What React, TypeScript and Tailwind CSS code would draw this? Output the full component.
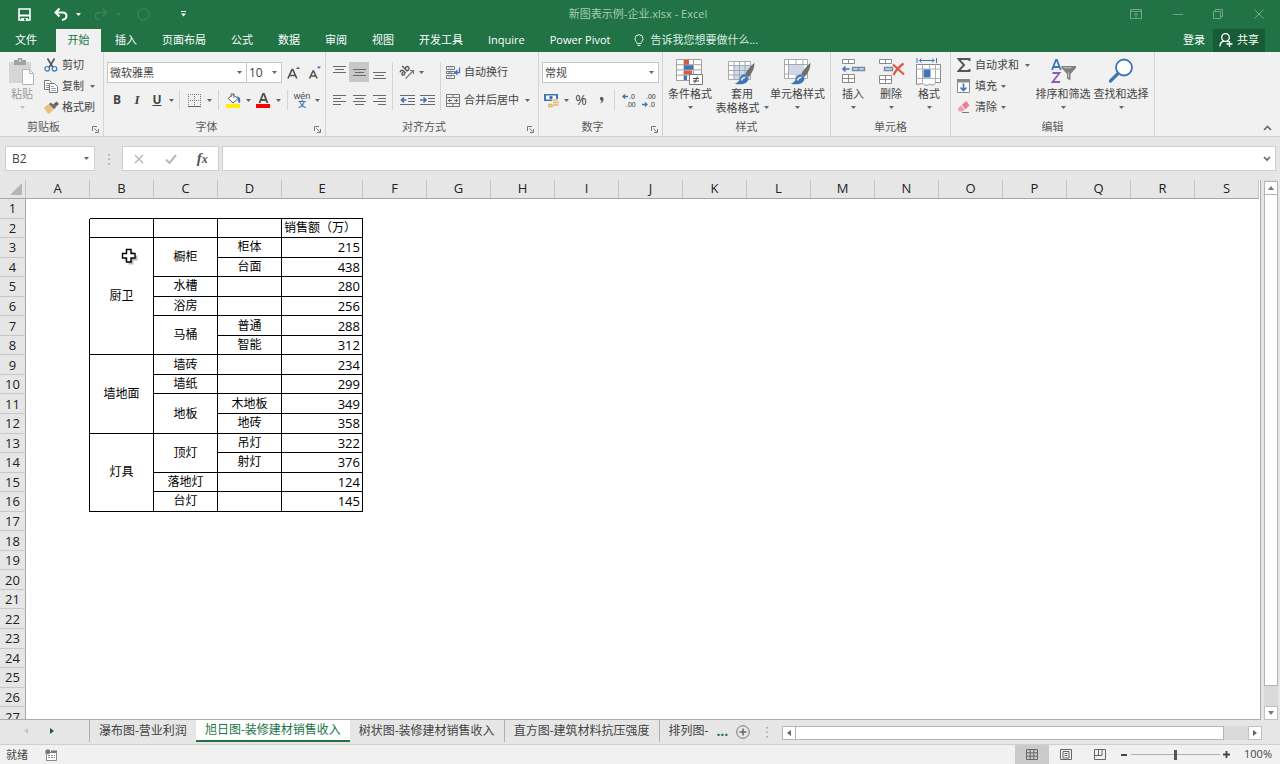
import type { ReactNode } from "react";

type Kids = { children?: ReactNode };

/* ---------- small building blocks ---------- */

function Arrow({ className = "text-[#666]" }: { className?: string }) {
  return (
    <svg width="5" height="3" viewBox="0 0 5 3" className={"shrink-0 " + className} aria-hidden="true">
      <path d="M0 0h5L2.5 3z" fill="currentColor" />
    </svg>
  );
}

function Svg({ w, h, children, className = "" }: Kids & { w: number; h: number; className?: string }) {
  return (
    <svg width={w} height={h} viewBox={`0 0 ${w} ${h}`} fill="none" className={"shrink-0 " + className} aria-hidden="true">
      {children}
    </svg>
  );
}

function Group({ label, width, launcher = false, children }: Kids & { label: string; width: string; launcher?: boolean }) {
  return (
    <section aria-label={label} className={"flex shrink-0 flex-col border-r border-[#d4d4d4] " + width}>
      <div className="flex h-[66px] items-start">{children}</div>
      <div className="flex h-[17px] items-center text-[#5a5a5a]">
        <span className="flex-1 text-center">{label}</span>
        {launcher && (
          <button type="button" aria-label={label + "设置"} className="flex w-4 justify-center pt-1.5">
            <Svg w={7} h={7}>
              <path d="M.5 5V.5H5M2.5 2.5l3 3M6.5 3v3.5H3" stroke="#777" />
            </Svg>
          </button>
        )}
      </div>
    </section>
  );
}

function Small({ icon, label, arrow = false, wide = false }: { icon: ReactNode; label: string; arrow?: boolean; wide?: boolean }) {
  return (
    <button type="button" className="flex h-5 items-center whitespace-nowrap">
      <span className="flex w-[18px] shrink-0">{icon}</span>
      {label}
      {arrow && <span className={wide ? "ml-1.5" : "ml-1"}><Arrow /></span>}
    </button>
  );
}

function Big({ icon, label, second, width, muted = false }: { icon: ReactNode; label: string; second?: string; width: string; muted?: boolean }) {
  return (
    <button type="button" className={"flex shrink-0 flex-col items-center whitespace-nowrap pt-1.5 leading-[14px] " + width + (muted ? " text-[#9a9a9a]" : "")}>
      <span className="flex h-[29px] items-start justify-center">{icon}</span>
      <span>{label}</span>
      <span className="flex h-[13px] items-center gap-1">
        {second}
        <Arrow className={muted ? "text-[#c0c0c0]" : "text-[#666]"} />
      </span>
    </button>
  );
}

function Tool({ label, width = "w-5", active = false, children }: Kids & { label: string; width?: string; active?: boolean }) {
  return (
    <button type="button" aria-label={label} className={"flex h-5 shrink-0 items-center justify-center " + width + (active ? " bg-[#c8c8c8]" : "")}>
      {children}
    </button>
  );
}

function Drop({ label, value, width }: { label: string; value: string; width: string }) {
  return (
    <div className={"relative h-[21px] shrink-0 border border-[#c6c6c6] bg-white " + width}>
      <select aria-label={label} className="block h-full w-full appearance-none bg-transparent pl-0.5 text-[#444] outline-none">
        <option>{value}</option>
      </select>
      <span className="pointer-events-none absolute top-2 right-1">
        <Arrow />
      </span>
    </div>
  );
}

const Rule = () => <span className="mx-1 h-5 w-px shrink-0 bg-[#d4d4d4]" />;

function Lines({ d }: { d: string }) {
  return (
    <Svg w={13} h={13}>
      <path d={d} stroke="#6a6a6a" />
    </Svg>
  );
}

/* ---------- icons ---------- */

const BLUE = "#3f74b5";
const GREY = "#777";

const Brush = () => (
  <>
    <path d="M26.5 5c-3.500 2.500-7.500 7.500-9.500 11.500l3.500 2.500c3.500-4 6-8.500 6-14z" fill="#6f6f6f" />
    <path d="M16.500 16.500c-3 0-4.500 2-5 5-.4 2-2.500 3.500-5 4 4.500 1.500 10 1 12.500-1.500 1.800-2 1.800-4 .5-5.500z" fill={BLUE} />
    <path d="M13.500 22.500c.5-2 1.800-3.300 4-3" stroke="#e4eefa" strokeWidth="1.600" />
  </>
);

const icons = {
  paste: (
    <Svg w={26} h={28}>
      <path d="M0 4h22v21H0z" fill="#d6d6d6" />
      <path d="M5 2h3.500a2.500 2.500 0 0 1 5 0H17v5H5z" fill="#a2a2a2" />
      <circle cx="11" cy="2.800" r="1" fill="#f1f1f1" />
      <path d="M13.500 11.500h7l4 4v11h-11z" fill="#fcfcfc" stroke="#b5b5b5" />
      <path d="M20.500 11.500v4h4" stroke="#b5b5b5" />
    </Svg>
  ),
  cut: (
    <Svg w={14} h={14}>
      <path d="M3.500 0.500 9 9.500M10.500 0.500 5 9.500" stroke="#555" strokeWidth="1.600" />
      <circle cx="3.200" cy="10.800" r="2.300" stroke={BLUE} strokeWidth="1.200" />
      <circle cx="10.500" cy="10.800" r="2.300" stroke={BLUE} strokeWidth="1.200" />
    </Svg>
  ),
  copy: (
    <Svg w={14} h={13}>
      <path d="M.5.5h5l2 2v7h-7z" fill="#fff" stroke={GREY} />
      <path d="M2 3.500h3M2 5.500h3M2 7.500h3" stroke="#999" />
      <path d="M5.500 3.500h5l3 3v6h-8z" fill="#fff" stroke={GREY} />
      <path d="M7 6.500h3M7 8.500h5M7 10.500h5" stroke="#8aa9cf" />
    </Svg>
  ),
  painter: (
    <Svg w={15} h={13}>
      <path d="M0 6.500 5 3l5 5-5 5C3 12 1 9 0 6.500z" fill="#e5c07f" />
      <path d="m5 3 2-1.500 5 5L10 8z" fill="#666" />
      <path d="m9 3.500 3.500-3L15 3l-3.500 3z" fill="#666" />
    </Svg>
  ),
  borders: (
    <Svg w={13} h={13}>
      <path d="M0 .5h13M0 6.500h13M.5 0v13M6.500 0v13M12.500 0v13" stroke="#777" strokeDasharray="1 1" />
      <path d="M0 12.500h13" stroke="#666" />
    </Svg>
  ),
  fill: (
    <Svg w={15} h={15}>
      <path d="m2 5.500 5-4 5 4-5 4.500z" fill="#fff" stroke="#666" />
      <path d="M5 4V1.500a1.500 1.500 0 0 1 3 0V5" stroke="#666" />
      <path d="M10.500 3.500c3 0 4.500 2 3.500 6.500-2-.5-2.500-2.500-2-4z" fill={BLUE} />
      <path d="M0 11h14v4H0z" fill="#ffef00" />
    </Svg>
  ),
  fontColor: (
    <Svg w={15} h={15}>
      <path d="M3.500 10 7 1h1l3.500 9M4.800 7h5.400" stroke="#555" strokeWidth="1.900" />
      <path d="M0 11h14v4H0z" fill="#f00" />
    </Svg>
  ),
  orient: (
    <Svg w={16} h={16}>
      <g transform="rotate(-45 6 7)" stroke="#555" strokeWidth="1.300">
        <path d="M1.500 4.500c1.500-1 3.500-.7 3.500 1V9M5 6.500c-2-.2-3.800.2-3.800 1.500S3.800 9.500 5 8" />
        <path d="M7.500 1.500V9" />
        <circle cx="9.300" cy="6.800" r="1.900" />
      </g>
      <path d="M6.500 14.500 14.500 6.500M11 6.500h3.500V10" stroke="#777" strokeWidth="1.200" />
    </Svg>
  ),
  wrap: (
    <Svg w={15} h={13}>
      <path d="M.5.5h8v3h-8zM.5 5.500h8v2h-8zM.5 9.500h8v3h-8z" fill="#fff" stroke={GREY} />
      <path d="M2 2h5M2 6.500h4M2 11h4" stroke="#9ab6da" />
      <path d="M13.500 1.500v5H9.500M11.500 4.200 9 6.500l2.500 2.300" stroke={BLUE} strokeWidth="1.300" />
    </Svg>
  ),
  merge: (
    <Svg w={14} h={13}>
      <path d="M.5.5h13v12H.5zM.5 3.500h13M.5 9.500h13M7 .5v3M7 9.500v3" stroke={GREY} />
      <path d="M2 6.500h4M12 6.500H8M4.200 4.800 2.500 6.500l1.700 1.700M9.800 4.800l1.700 1.700-1.700 1.700" stroke="#666" />
    </Svg>
  ),
  currency: (
    <Svg w={16} h={15}>
      <path d="M0 1h14v7H0z" fill={BLUE} />
      <path d="M2 2.500h10v4H2z" fill="#fff" />
      <circle cx="7" cy="4.500" r="1.800" fill={BLUE} />
      <path d="M8 6h6v8H8z" fill="#f1f1f1" />
      <path d="M8.500 7h5M9 9.500h6M8.500 12h6M4 11.500h4M4 13.500h5" stroke="#e3b566" strokeWidth="1.600" />
    </Svg>
  ),
  conditional: (
    <Svg w={28} h={28}>
      <path d="M.5 1.500h25v21H.5zM.5 6.700h25M.5 11.900h25M.5 17.100h25M8 1.500v21M17.500 1.500v21" fill="#fff" stroke="#a0a0a0" />
      <path d="M8 2h5v4.700H8zM8 12.500h8v4H8z" fill="#d35c3f" />
      <path d="M8 7.200h9v4.500H8zM8 17.500h3v4.500H8z" fill={BLUE} />
      <path d="M13.500 16.500h13v10h-13z" fill="#fff" stroke="#777" />
      <path d="M17 20.500h6M17 23h6M21.500 18.500l-3 6.500" stroke="#444" />
    </Svg>
  ),
  tableFormat: (
    <Svg w={28} h={28}>
      <path d="M.5 3.500h22v18H.5z" fill="#fff" />
      <path d="M6 8h16.500v13.500H6z" fill="#cbdcf0" />
      <path d="M.5 3.500h22v18H.5zM.5 7.500h22M.5 12.500h22M.5 17h22M6 3.500v18M11.500 3.500v18M17 3.500v18" stroke="#a8a8a8" />
      <Brush />
    </Svg>
  ),
  cellStyle: (
    <Svg w={28} h={28}>
      <path d="M.5 1.500h23v19H.5zM.5 6.500h23M.5 16h23M4.500 1.500v19M19 1.500v19M12 1.500v5M12 16v4.500" fill="#fff" stroke="#a8a8a8" />
      <path d="M5 7h13.500v8.500H5z" fill="#cfd6ea" />
      <Brush />
    </Svg>
  ),
  insert: (
    <Svg w={25} h={26}>
      <path d="M1.500 1.500h12v4h-12zM7.500 1.500v4M1.500 16.500h12v8h-12zM7.500 16.500v8M1.500 20.500h12" fill="#fff" stroke="#8a8a8a" />
      <path d="M11.500 9.500h12v3h-12zM17.500 9.500v3" fill="#cfe0f0" stroke="#6f8ba5" strokeWidth="1.400" />
      <path d="M8.500 11H2.500M4.500 8.500 2 11l2.500 2.500" stroke={BLUE} strokeWidth="1.500" />
    </Svg>
  ),
  remove: (
    <Svg w={27} h={26}>
      <path d="M1.500 1.500h12v4h-12zM7.500 1.500v4M1.500 17.500h12v8h-12zM7.500 17.500v8M1.500 21.500h12" fill="#fff" stroke="#8a8a8a" />
      <path d="M6.500 9.500h8v3h-8z" fill="#cfe0f0" stroke="#6f8ba5" strokeWidth="1.400" />
      <path d="m15 6.500 11 10M25.500 5.500c-4 3-8 7-10 11.500" stroke="#dc5a44" strokeWidth="2.200" />
    </Svg>
  ),
  format: (
    <Svg w={26} h={28}>
      <path d="M1 0v5M20.500 0v5M3 2.500h15.500M5.500.5 3.500 2.500l2 2M16 .5l2 2-2 2" stroke={BLUE} />
      <path d="M.5 6.500h24v18h-5c-1 3-4 3-6 1.500-1.500 1.500-5 2-6.500-.5l-6.500 1z" fill="#fff" stroke="#8a8a8a" />
      <path d="M.5 11h24M.5 20.500h24M6.500 6.500v18M13.500 6.500v4M19.500 6.500v18" stroke="#b0b0b0" />
      <path d="M7.500 11.500h7v8h-7z" fill={BLUE} />
    </Svg>
  ),
  sum: (
    <Svg w={14} h={14}>
      <path d="M12.500 3V1H1.500l5.500 6-5.500 6h11v-2" stroke="#555" strokeWidth="1.900" />
    </Svg>
  ),
  fillDown: (
    <Svg w={13} h={14}>
      <path d="M.5.5h12v13H.5z" fill="#fff" stroke="#888" />
      <path d="M0 0h13v3.500H0z" fill="#888" />
      <path d="M6.500 4.500v7M3.500 8.500l3 3 3-3" stroke={BLUE} strokeWidth="1.700" />
    </Svg>
  ),
  erase: (
    <Svg w={14} h={12}>
      <path d="m5 3.500 4.500-3.500 3 4.500-4.500 4z" fill="#ea7f9b" />
      <path d="m4.300 4.300 3.200 4.700-2.500 1.500H2L.8 7.500z" fill="#f0a0b4" />
      <path d="M5 11.500h7" stroke="#777" />
    </Svg>
  ),
  sort: (
    <Svg w={27} h={28}>
      <path d="M2 12 6 2h.8l4 10M3.300 9h6.200" stroke={BLUE} strokeWidth="1.800" />
      <path d="M2.500 15h7L2.500 24H10" stroke="#8a5cb8" strokeWidth="1.800" />
      <path d="M11.500 8H26v2l-5.500 6v6.500l-3.500-2V16l-5.500-6z" fill="#808080" />
      <path d="M13.500 9.700h8M18.500 14.500v5" stroke="#c4c4c4" />
    </Svg>
  ),
  find: (
    <Svg w={26} h={26}>
      <circle cx="16" cy="9.500" r="8" fill="#fff" stroke={BLUE} strokeWidth="1.800" />
      <path d="m10 15.500-7.500 7.500" stroke={BLUE} strokeWidth="3.200" strokeLinecap="round" />
    </Svg>
  ),
};

/* ---------- worksheet data ---------- */

type Cell = { text: string; span?: number; kind?: "text" | "num" | "head" };

const c = (text: string, span = 1): Cell => ({ text, span });
const n = (text: string): Cell => ({ text, kind: "num" });

const dataRows: Record<number, Cell[]> = {
  2: [c(""), c(""), c(""), { text: "销售额（万）", kind: "head" }],
  3: [c("厨卫", 6), c("橱柜", 2), c("柜体"), n("215")],
  4: [c("台面"), n("438")],
  5: [c("水槽"), c(""), n("280")],
  6: [c("浴房"), c(""), n("256")],
  7: [c("马桶", 2), c("普通"), n("288")],
  8: [c("智能"), n("312")],
  9: [c("墙地面", 4), c("墙砖"), c(""), n("234")],
  10: [c("墙纸"), c(""), n("299")],
  11: [c("地板", 2), c("木地板"), n("349")],
  12: [c("地砖"), n("358")],
  13: [c("灯具", 4), c("顶灯", 2), c("吊灯"), n("322")],
  14: [c("射灯"), n("376")],
  15: [c("落地灯"), c(""), n("124")],
  16: [c("台灯"), c(""), n("145")],
};

const columns = "ABCDEFGHIJKLMNOPQRS".split("");
const rowNumbers = Array.from({ length: 27 }, (_, i) => i + 1);
const menuTabs = ["插入", "页面布局", "公式", "数据", "审阅", "视图", "开发工具", "Inquire", "Power Pivot"];

/* ---------- page regions ---------- */

function TitleBar() {
  return (
    <div className="grid h-7 shrink-0 grid-cols-[1fr_auto_1fr] items-center text-[#a5cdb5]">
      <div className="flex items-center text-white">
        <button type="button" aria-label="保存" className="flex w-12 justify-center">
          <Svg w={13} h={13}>
            <path d="M1 1h11v11H1z" stroke="#fff" strokeWidth="1.600" />
            <path d="M1 6.500h11v2H1zM3 10h7v3H3z" fill="#fff" />
            <path d="M6 10.500h2v2H6z" fill="#217346" />
          </Svg>
        </button>
        <button type="button" aria-label="撤消" className="flex w-[26px] justify-center">
          <Svg w={14} h={13}>
            <path d="M5.500.5 1.500 4.500l4 4M2 4.500h6.500c2.500 0 4 1.500 4 3.500s-1.500 3.500-4.500 4" stroke="#fff" strokeWidth="2" />
          </Svg>
        </button>
        <button type="button" aria-label="撤消列表" className="flex w-2 justify-center"><Arrow className="text-white" /></button>
        <button type="button" aria-label="恢复" className="ml-1.5 flex w-[26px] justify-center">
          <Svg w={14} h={13}>
            <path d="M8.500.5l4 4-4 4M12 4.500H5.500C3 4.500 1.500 6 1.500 8S3 11.500 6 12" stroke="#3b8259" strokeWidth="1.700" />
          </Svg>
        </button>
        <button type="button" aria-label="恢复列表" className="flex w-2 justify-center"><Arrow className="text-[#3b8259]" /></button>
        <button type="button" aria-label="录制" className="flex w-[42px] justify-center">
          <Svg w={13} h={13}><circle cx="6.500" cy="6.500" r="5.700" stroke="#3b8259" strokeWidth="1.200" /></Svg>
        </button>
        <button type="button" aria-label="自定义快速访问工具栏" className="flex w-[38px] justify-center">
          <Svg w={5} h={6}><path d="M0 .5h5" stroke="#fff" /><path d="M0 2.500h5L2.500 5.500z" fill="#fff" /></Svg>
        </button>
      </div>
      <h1 className="pr-1">新图表示例-企业.xlsx - Excel</h1>
      <div className="flex justify-end">
        <button type="button" aria-label="功能区显示选项" className="flex w-11 justify-center">
          <Svg w={12} h={10}><path d="M.5.5h11v9H.5zM.5 2.500h11M6 8.500v-4M4 6l2-2 2 2" stroke="#72a888" /></Svg>
        </button>
        <button type="button" aria-label="最小化" className="flex w-10 justify-center">
          <Svg w={10} h={10}><path d="M0 5.500h10" stroke="#72a888" /></Svg>
        </button>
        <button type="button" aria-label="还原" className="flex w-10 justify-center">
          <Svg w={10} h={10}><path d="M.5 2.500h7v7h-7zM2.500 2.500v-2h7v7h-2" stroke="#72a888" /></Svg>
        </button>
        <button type="button" aria-label="关闭" className="flex w-[42px] justify-center">
          <Svg w={10} h={10}><path d="m.5.5 9 9M9.500.5l-9 9" stroke="#72a888" /></Svg>
        </button>
      </div>
    </div>
  );
}

function MenuBar() {
  return (
    <nav className="flex h-6 shrink-0 text-white">
      <button type="button" className="w-14 pr-1">文件</button>
      <button type="button" className="mt-px w-[45px] bg-[#f1f1f1] pb-px text-[#217346]">开始</button>
      <div className="ml-0.5 flex gap-px">
        {menuTabs.map((t) => (
          <button key={t} type="button" className="px-3 whitespace-nowrap">{t}</button>
        ))}
      </div>
      <button type="button" className="ml-3 flex items-center gap-1.5 text-[#dcebe2]">
        <Svg w={10} h={13}>
          <path d="M3 9.500C3 8 1 7 1 4.700a4 4 0 0 1 8 0C9 7 7 8 7 9.500zM3.500 11.500h3" stroke="#e6f1ea" />
        </Svg>
        告诉我您想要做什么...
      </button>
      <button type="button" className="ml-auto px-2">登录</button>
      <button type="button" className="mt-px mr-[15px] flex w-[52px] items-center justify-center gap-1 bg-[#185c37] pb-0.5">
        <Svg w={14} h={14}>
          <circle cx="6.500" cy="4.500" r="3.800" stroke="#fff" strokeWidth="1.300" />
          <path d="M1 13.500c0-3 1.500-5 4-5.500M8 8l1.500 1M10.500 8v6M7.500 11h6" stroke="#fff" strokeWidth="1.300" />
        </Svg>
        共享
      </button>
    </nav>
  );
}

function Ribbon() {
  return (
    <div className="flex h-[85px] shrink-0 border-b border-[#d0d0d0] bg-[#f1f1f1] text-[#444]">
      <Group label="剪贴板" width="w-[104px]" launcher>
        <Big width="w-11" icon={icons.paste} label="粘贴" muted />
        <div className="flex flex-col gap-px pt-[3px]">
          <Small icon={icons.cut} label="剪切" />
          <Small icon={icons.copy} label="复制" arrow wide />
          <Small icon={icons.painter} label="格式刷" />
        </div>
      </Group>

      <Group label="字体" width="w-[222px]" launcher>
        <div className="flex flex-col gap-[7px] pt-2.5 pl-[3px]">
          <div className="flex items-center">
            <Drop label="字体名称" value="微软雅黑" width="w-[140px]" />
            <Drop label="字号" value="10" width="-ml-px w-9 text-xs" />
            <Tool label="增大字号" width="w-[22px]">
              <Svg w={13} h={13}>
                <path d="M1 12.500 5 3.500h.8l4 9M2.500 9.500h5.800" stroke="#555" strokeWidth="1.700" />
                <path d="M9 3h4l-2-2.500z" fill={BLUE} />
              </Svg>
            </Tool>
            <Tool label="减小字号">
              <Svg w={13} h={13}>
                <path d="M1.500 12.500 5 5h.6l3.500 7.500M3 10h5" stroke="#555" strokeWidth="1.600" />
                <path d="M9 .5h4L11 3z" fill={BLUE} />
              </Svg>
            </Tool>
          </div>
          <div className="flex items-center">
            <Tool label="加粗"><b className="text-xs">B</b></Tool>
            <Tool label="倾斜"><i className="font-['Liberation_Serif'] text-[13px] font-bold">I</i></Tool>
            <Tool label="下划线"><b className="text-xs underline">U</b></Tool>
            <Tool label="下划线样式" width="w-2"><Arrow /></Tool>
            <Rule />
            <Tool label="边框">{icons.borders}</Tool>
            <Tool label="边框列表" width="w-2.5"><Arrow /></Tool>
            <Rule />
            <Tool label="填充颜色">{icons.fill}</Tool>
            <Tool label="填充颜色列表" width="w-2.5"><Arrow /></Tool>
            <Tool label="字体颜色">{icons.fontColor}</Tool>
            <Tool label="字体颜色列表" width="w-2.5"><Arrow /></Tool>
            <Rule />
            <Tool label="拼音">
              <span className="flex flex-col items-center text-[9px] leading-[8px]">
                <span className="font-['Liberation_Sans']">wén</span>
                <span className="text-[8px] font-bold text-[#3f74b5]">文</span>
              </span>
            </Tool>
            <Tool label="拼音列表" width="w-2.5"><Arrow /></Tool>
          </div>
        </div>
      </Group>

      <Group label="对齐方式" width="w-[213px]" launcher>
        <div className="grid grid-cols-3 gap-y-2 pt-2.5 pl-[3px]">
          <Tool label="顶端对齐"><Lines d="M0 .5h13M2 3.500h9M0 6.500h13" /></Tool>
          <Tool label="垂直居中" active><Lines d="M0 3.500h13M2 6.500h9M0 9.500h13" /></Tool>
          <Tool label="底端对齐"><Lines d="M0 6.500h13M2 9.500h9M0 12.500h13" /></Tool>
          <Tool label="左对齐"><Lines d="M0 1.500h13M0 4.500h8M0 7.500h13M0 10.500h8" /></Tool>
          <Tool label="居中"><Lines d="M0 1.500h13M2 4.500h9M0 7.500h13M2 10.500h9" /></Tool>
          <Tool label="右对齐"><Lines d="M0 1.500h13M5 4.500h8M0 7.500h13M5 10.500h8" /></Tool>
        </div>
        <span className="mt-2.5 ml-[3px] h-12 w-px bg-[#d4d4d4]" />
        <div className="flex w-[47px] flex-col gap-2 pt-2.5 pl-1">
          <div className="flex">
            <Tool label="方向">{icons.orient}</Tool>
            <Tool label="方向列表" width="w-2"><Arrow /></Tool>
          </div>
          <div className="flex">
            <Tool label="减少缩进量">
              <Svg w={15} h={12}>
                <path d="M0 1.500h15M8 4.500h7M8 7.500h7M0 10.500h15" stroke="#6a6a6a" />
                <path d="M6.500 6h-5M4 3.500 1.500 6 4 8.500" stroke={BLUE} strokeWidth="1.700" />
              </Svg>
            </Tool>
            <Tool label="增加缩进量">
              <Svg w={15} h={12}>
                <path d="M0 1.500h15M8 4.500h7M8 7.500h7M0 10.500h15" stroke="#6a6a6a" />
                <path d="M0 6h5.500M3.500 3.500 6 6 3.500 8.500" stroke={BLUE} strokeWidth="1.700" />
              </Svg>
            </Tool>
          </div>
        </div>
        <span className="mt-2.5 h-12 w-px bg-[#d4d4d4]" />
        <div className="flex flex-col gap-2 pt-2.5 pl-[5px]">
          <Small icon={icons.wrap} label="自动换行" />
          <Small icon={icons.merge} label="合并后居中" arrow wide />
        </div>
      </Group>

      <Group label="数字" width="w-[124px]" launcher>
        <div className="flex flex-1 flex-col gap-[7px] pt-2.5 pr-1 pl-[3px]">
          <Drop label="数字格式" value="常规" width="w-full" />
          <div className="flex items-center">
            <Tool label="会计数字格式">{icons.currency}</Tool>
            <Tool label="会计格式列表" width="w-2"><Arrow /></Tool>
            <Tool label="百分比样式" width="w-[22px]"><span className="text-sm">%</span></Tool>
            <Tool label="千位分隔样式" width="w-[18px]">
              <Svg w={5} h={8}><path d="M1 2.500C1 .5 4.500.5 4.500 3S3 7 1 7.500C2 6.500 2.800 5.500 2.500 4.500 1.500 4.500 1 3.500 1 2.500z" fill="#555" /></Svg>
            </Tool>
            <Rule />
            <Tool label="增加小数位数">
              <Svg w={16} h={18}>
                <text x="8" y="8" fontSize="7" fontFamily="Liberation Sans" fill="#333">.0</text>
                <text x="5" y="16" fontSize="7" fontFamily="Liberation Sans" fill="#333">.00</text>
                <path d="M7 5.500H2M4 3.500l-2 2 2 2" stroke={BLUE} strokeWidth="1.300" />
              </Svg>
            </Tool>
            <Tool label="减少小数位数">
              <Svg w={16} h={18}>
                <text x="5" y="8" fontSize="7" fontFamily="Liberation Sans" fill="#333">.00</text>
                <text x="8" y="16" fontSize="7" fontFamily="Liberation Sans" fill="#333">.0</text>
                <path d="M1 13.500h5M4 11.500l2 2-2 2" stroke={BLUE} strokeWidth="1.300" />
              </Svg>
            </Tool>
          </div>
        </div>
      </Group>

      <Group label="样式" width="w-[168px]">
        <Big width="w-[54px]" icon={icons.conditional} label="条件格式" />
        <Big width="w-[50px]" icon={icons.tableFormat} label="套用" second="表格格式" />
        <Big width="w-[61px]" icon={icons.cellStyle} label="单元格样式" />
      </Group>

      <Group label="单元格" width="w-[120px]">
        <div className="flex pl-[3px]">
          <Big width="w-[38px]" icon={icons.insert} label="插入" />
          <Big width="w-[38px]" icon={icons.remove} label="删除" />
          <Big width="w-[38px]" icon={icons.format} label="格式" />
        </div>
      </Group>

      <Group label="编辑" width="w-[204px]">
        <div className="flex w-[83px] flex-col gap-px pt-[3px] pl-1.5">
          <Small icon={icons.sum} label="自动求和" arrow wide />
          <Small icon={icons.fillDown} label="填充" arrow />
          <Small icon={icons.erase} label="清除" arrow />
        </div>
        <Big width="w-[58px]" icon={icons.sort} label="排序和筛选" />
        <Big width="w-[58px]" icon={icons.find} label="查找和选择" />
      </Group>

      <button type="button" aria-label="折叠功能区" className="mr-2 mb-1 ml-auto flex items-end pb-px">
        <Svg w={9} h={6}><path d="m1 5 3.500-3.500L8 5" stroke="#666" strokeWidth="1.600" /></Svg>
      </button>
    </div>
  );
}

function FormulaBar() {
  return (
    <div className="flex h-[43px] shrink-0 items-start bg-[#e6e6e6] pt-[9px] pr-1 pl-[5px] text-[#444]">
      <div className="flex h-[25px] w-[90px] items-center border border-[#cfcfcf] bg-white">
        <input aria-label="名称框" defaultValue="B2" className="h-full w-0 flex-1 bg-transparent pl-1.5 text-xs outline-none" />
        <button type="button" aria-label="名称列表" className="flex w-4 justify-center"><Arrow /></button>
      </div>
      <span className="flex h-[25px] w-[27px] items-center justify-center">
        <Svg w={2} h={12}><path d="M1 1v11" stroke="#a0a0a0" strokeWidth="1.500" strokeDasharray="1.500 3" /></Svg>
      </span>
      <div className="flex h-[25px] w-[97px] items-center border border-[#cfcfcf] bg-white">
        <button type="button" aria-label="取消" className="flex w-8 justify-center">
          <Svg w={10} h={10}><path d="m1 1 8 8M9 1 1 9" stroke="#b8b8b8" strokeWidth="1.500" /></Svg>
        </button>
        <button type="button" aria-label="输入" className="flex w-8 justify-center">
          <Svg w={12} h={10}><path d="m1 5.500 3.500 3.500L11 1" stroke="#b8b8b8" strokeWidth="2" /></Svg>
        </button>
        <button type="button" aria-label="插入函数" className="w-8 font-['Liberation_Serif'] text-[15px] font-bold text-[#555] italic">
          f<span className="text-xs">x</span>
        </button>
      </div>
      <div className="ml-[3px] flex h-[25px] flex-1 items-center border border-[#cfcfcf] bg-white">
        <input aria-label="编辑栏" className="h-full w-0 flex-1 bg-transparent px-1 text-xs outline-none" />
        <button type="button" aria-label="展开编辑栏" className="flex w-4 justify-center">
          <Svg w={8} h={6}><path d="m1 1 3 3 3-3" stroke="#666" strokeWidth="1.700" /></Svg>
        </button>
      </div>
    </div>
  );
}

function Worksheet() {
  return (
    <div className="flex min-h-0 flex-1 bg-[#e6e6e6]">
      <div className="relative min-w-0 flex-1 overflow-hidden border-r border-b border-[#ababab] bg-white">
        <table className="h-[547px] w-[1259px] table-fixed border-separate border-spacing-0 bg-white text-xs leading-[18px] text-black">
          <colgroup>
            <col className="w-[26px]" />
            {columns.map((k) => (
              <col key={k} className={k === "E" ? "w-[81px]" : "w-16"} />
            ))}
          </colgroup>
          <thead className="h-[19px] bg-[#e6e6e6]">
            <tr className="h-[19px]">
              <th aria-label="全选" className="border-r border-b border-r-[#c4c4c4] border-b-[#a6a6a6] p-0">
                <Svg w={12} h={12} className="mr-[3px] ml-auto"><path d="M12 0v12H0z" fill="#b5b5b5" /></Svg>
              </th>
              {columns.map((k) => (
                <th key={k} scope="col" className="border-r border-b border-r-[#c4c4c4] border-b-[#a6a6a6] p-0 pb-0.5 text-[13px] leading-4 font-normal text-[#222]">{k}</th>
              ))}
            </tr>
          </thead>
          <tbody>
            {rowNumbers.map((r) => (
              <tr key={r}>
                <th scope="row" className="border-r border-b border-r-[#a6a6a6] border-b-[#c8c8c8] bg-[#e6e6e6] p-0 text-[13px] font-normal text-[#222]">{r}</th>
                <td className={r >= 2 && r <= 16 ? "border-r border-black p-0" : "p-0"} />
                {(dataRows[r] ?? ["B", "C", "D", "E"].map(() => null)).map((cell, i) =>
                  cell ? (
                    <td
                      key={i}
                      rowSpan={cell.span}
                      className={
                        "border-r border-b border-black p-0 whitespace-nowrap " +
                        (cell.kind === "num" ? "pr-0.5 text-right text-[13px]" : cell.kind === "head" ? "pl-0.5 text-left" : "text-center")
                      }
                    >
                      {cell.text}
                    </td>
                  ) : (
                    <td key={i} className={r === 1 ? "border-b border-black p-0" : "p-0"} />
                  ),
                )}
                <td colSpan={14} className="p-0" />
              </tr>
            ))}
          </tbody>
        </table>
        <Svg w={18} h={18} className="absolute top-[68px] left-[121px]">
          <path d="M7.500 3.500h5v4h4v5h-4v4h-5v-4h-4v-5h4z" fill="#888" opacity=".6" />
          <path d="M5.500 1.500h4.500v4h4v4.500h-4v4H5.500v-4h-4V5.500h4z" fill="#fff" stroke="#000" strokeWidth="1.400" />
        </Svg>
      </div>
      <div className="mr-[2px] ml-[3px] flex w-3.5 flex-col bg-[#dadada] pt-px">
        <button type="button" aria-label="向上滚动" className="flex h-3.5 items-center justify-center border border-[#b5b5b5] bg-white">
          <Svg w={6} h={4}><path d="M0 4h6L3 0z" fill="#777" /></Svg>
        </button>
        <div className="-mt-px flex-1 border border-[#b5b5b5] bg-white" />
        <button type="button" aria-label="向下滚动" className="mt-5 flex h-3.5 items-center justify-center border border-[#c0c0c0] bg-white">
          <Svg w={6} h={4}><path d="M0 0h6L3 4z" fill="#777" /></Svg>
        </button>
      </div>
    </div>
  );
}

function SheetTabs() {
  const tab = "h-full px-[9px] whitespace-nowrap";
  return (
    <div className="flex h-[25px] shrink-0 border-b border-[#cfcfcf] bg-[#e6e6e6] pr-[18px] text-xs text-[#444]">
      <div className="flex w-[89px] items-center pb-0.5">
        <button type="button" aria-label="上一张" className="flex w-[52px] justify-center"><Svg w={4} h={6}><path d="M4 0v6L0 3z" fill="#c4c4c4" /></Svg></button>
        <button type="button" aria-label="下一张" className="flex w-0 justify-center"><Svg w={4} h={6}><path d="M0 0v6l4-3z" fill="#1f5c3d" /></Svg></button>
      </div>
      <div className="flex h-[22px] items-center leading-5">
        <button type="button" className={tab + " border-l border-[#b0b0b0]"}>瀑布图-营业利润</button>
        <button type="button" className={tab + " border-b-2 border-[#217346] bg-white text-[#217346]"}>旭日图-装修建材销售收入</button>
        <button type="button" className={tab + " border-r border-[#b0b0b0]"}>树状图-装修建材销售收入</button>
        <button type="button" className={tab + " border-r border-[#b0b0b0]"}>直方图-建筑材料抗压强度</button>
        <button type="button" className="h-full pl-[9px] whitespace-nowrap">排列图-</button>
        <button type="button" aria-label="更多工作表" className="ml-2 text-sm font-bold text-[#217346]">...</button>
        <button type="button" aria-label="新工作表" className="ml-2 pt-0.5">
          <Svg w={14} h={14}><circle cx="7" cy="7" r="6.300" stroke="#777" /><path d="M7 3.500v7M3.500 7h7" stroke="#666" strokeWidth="1.500" /></Svg>
        </button>
      </div>
      <span className="ml-4 flex items-center">
        <Svg w={2} h={12}><path d="M1 1v11" stroke="#a0a0a0" strokeWidth="1.500" strokeDasharray="1.500 3" /></Svg>
      </span>
      <div className="mt-[6px] ml-3.5 flex h-3.5 flex-1 bg-[#dadada]">
        <button type="button" aria-label="向左滚动" className="flex w-3.5 items-center justify-center border border-[#b5b5b5] bg-white">
          <Svg w={4} h={6}><path d="M4 0v6L0 3z" fill="#666" /></Svg>
        </button>
        <div className="-ml-px flex-1 border border-[#b5b5b5] bg-white" />
        <button type="button" aria-label="向右滚动" className="ml-6 flex w-3.5 items-center justify-center border border-[#c0c0c0] bg-white">
          <Svg w={4} h={6}><path d="M0 0v6l4-3z" fill="#666" /></Svg>
        </button>
      </div>
    </div>
  );
}

function StatusBar() {
  return (
    <footer className="flex h-[19px] shrink-0 items-center bg-[#f1f1f1] text-[#444]">
      <span className="pl-1.5">就绪</span>
      <button type="button" aria-label="录制宏" className="ml-[17px]">
        <Svg w={12} h={12}>
          <path d="M1.500 3.500h10v8h-10z" fill="#fff" stroke="#888" />
          <path d="M6 2.500h6" stroke="#777" strokeWidth="2" />
          <path d="M3 6.500h7M3 8.500h7" stroke="#888" strokeDasharray="2 1" />
          <circle cx="2.800" cy="2.800" r="2.500" fill="#777" />
        </Svg>
      </button>
      <div className="ml-auto flex h-full items-center">
        <button type="button" aria-label="普通" className="flex h-full w-[34px] items-center justify-center bg-[#cbcbcb]">
          <Svg w={12} h={11}><path d="M.5.5h11v10H.5zM.5 3.800h11M.5 7.200h11M4.200.5v10M7.800.5v10" stroke="#666" /></Svg>
        </button>
        <button type="button" aria-label="页面布局" className="flex w-[34px] justify-center">
          <Svg w={12} h={11}><path d="M.5.5h11v10H.5zM3 2.500h6v6.500H3zM4.500 4.500h3M4.500 6.500h3" stroke="#666" /></Svg>
        </button>
        <button type="button" aria-label="分页预览" className="flex w-[34px] justify-center">
          <Svg w={12} h={11}><path d="M.5.5h11v10H.5zM.5 6.500h7.500V.5M4.500.5v6" stroke="#666" /></Svg>
        </button>
        <button type="button" aria-label="缩小" className="flex w-3.5 justify-center"><Svg w={6} h={2}><path d="M0 1h6" stroke="#444" strokeWidth="2" /></Svg></button>
        <input
          type="range"
          aria-label="缩放"
          min={10}
          max={190}
          defaultValue={100}
          className="h-3 w-[89px] appearance-none bg-[linear-gradient(#b0b0b0,#b0b0b0)] bg-[length:100%_1px] bg-center bg-no-repeat [&::-webkit-slider-thumb]:h-2.5 [&::-webkit-slider-thumb]:w-[3px] [&::-webkit-slider-thumb]:appearance-none [&::-webkit-slider-thumb]:bg-[#555]"
        />
        <button type="button" aria-label="放大" className="flex w-3 justify-center"><Svg w={7} h={7}><path d="M0 3.500h7M3.500 0v7" stroke="#444" strokeWidth="1.800" /></Svg></button>
        <button type="button" className="w-12 pb-px pl-1 text-center">100%</button>
      </div>
    </footer>
  );
}

export default function App() {
  return (
    <div className="flex h-screen flex-col overflow-hidden bg-[#217346] font-['Open_Sans','Noto_Sans_CJK_SC',sans-serif] text-[11px] leading-4">
      <TitleBar />
      <MenuBar />
      <Ribbon />
      <FormulaBar />
      <Worksheet />
      <SheetTabs />
      <StatusBar />
    </div>
  );
}
